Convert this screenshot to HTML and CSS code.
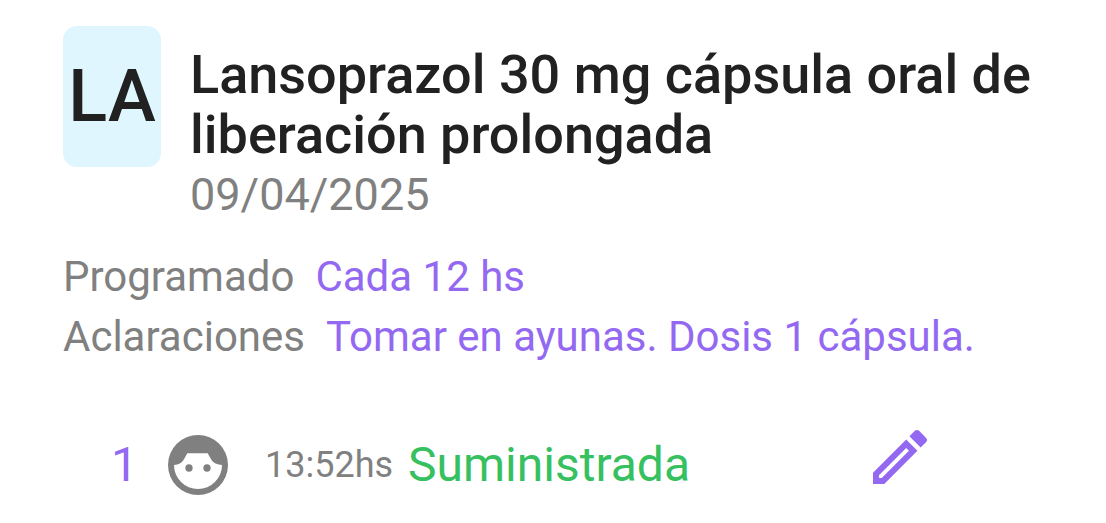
FILE: index.html
```html
<!DOCTYPE html>
<html lang="es">
<head>
    <meta charset="UTF-8">
    <meta name="viewport" content="width=device-width, initial-scale=1.0">
    <title>Medicación</title>
    <link rel="stylesheet" href="styles.css">
</head>
<body>
    <main class="card">
        <header class="card-header">
            <div class="avatar">LA</div>
            <div class="heading">
                <h1>Lansoprazol 30 mg cápsula oral de liberación prolongada</h1>
                <time class="date" datetime="2025-04-09">09/04/2025</time>
            </div>
        </header>

        <dl class="details">
            <div class="detail">
                <dt>Programado</dt>
                <dd>Cada 12 hs</dd>
            </div>
            <div class="detail">
                <dt>Aclaraciones</dt>
                <dd>Tomar en ayunas. Dosis 1 cápsula.</dd>
            </div>
        </dl>

        <div class="dose">
            <span class="dose-number">1</span>
            <svg class="face-icon" viewBox="0 0 180 180" aria-hidden="true">
                <path fill-rule="evenodd" d="M90 0a90 90 0 1 0 0 180a90 90 0 1 0 0-180zM18 90C32 89 41 84 47 74L58 55H119L130 74C136 84 148 89 162 90A72 72 0 0 1 18 90z"/>
                <circle cx="63" cy="99" r="11"/>
                <circle cx="117" cy="99" r="11"/>
            </svg>
            <span class="dose-time">13:52hs</span>
            <span class="dose-status">Suministrada</span>
            <button class="edit-button" type="button" aria-label="Editar">
                <svg viewBox="3 3 18 18" aria-hidden="true">
                    <path d="M3 17.25V21h3.75L17.81 9.94l-3.75-3.75zM5.92 19H5v-.92l9.06-9.06.92.92zM20.71 5.63l-2.34-2.34c-.2-.2-.45-.29-.71-.29s-.51.1-.7.29l-1.83 1.83 3.75 3.75 1.83-1.83c.39-.39.39-1.02 0-1.41z"/>
                </svg>
            </button>
        </div>
    </main>
</body>
</html>
```
FILE: styles.css
```css
body {
    margin: 0;
    background-color: #fff;
    font-family: Roboto, sans-serif;
    color: #212121;
}
.card {
    padding: 26px 64px 20px 63px;
}
.card-header {
    display: flex;
    align-items: flex-start;
    gap: 29px;
}
.avatar {
    display: flex;
    align-items: center;
    justify-content: center;
    width: 98px;
    height: 141px;
    border-radius: 14px;
    background-color: #dff6ff;
    font-size: 72px;
    font-weight: 500;
    line-height: 80px;
}
.heading {
    flex: 1;
    padding-top: 19px;
}
h1 {
    margin: 0;
    font-size: 54px;
    font-weight: 500;
    line-height: 60px;
}
.date {
    display: block;
    color: #808080;
    font-size: 45px;
    line-height: 60px;
}
.details {
    margin: 22px 0 0;
    font-size: 42px;
    line-height: 60px;
}
.detail {
    display: flex;
    gap: 21px;
}
.detail dt {
    color: #808080;
}
.detail dd {
    margin: 0;
    color: #9469f2;
}
.dose {
    display: flex;
    align-items: center;
    margin-top: 60px;
    padding: 0 115px 0 48px;
    line-height: 76px;
}
.dose-number {
    color: #9469f2;
    font-size: 48px;
}
.face-icon {
    width: 60px;
    height: 60px;
    margin: 0 37px 0 30px;
    fill: #808080;
}
.dose-time {
    color: #808080;
    font-size: 36px;
}
.dose-status {
    margin-left: 15px;
    color: #36c05f;
    font-size: 48px;
}
.edit-button {
    margin-left: auto;
    padding: 0 0 16px;
    border: none;
    background: none;
    cursor: pointer;
}
.edit-button svg {
    display: block;
    width: 54px;
    height: 54px;
    fill: #9469f2;
}
```
